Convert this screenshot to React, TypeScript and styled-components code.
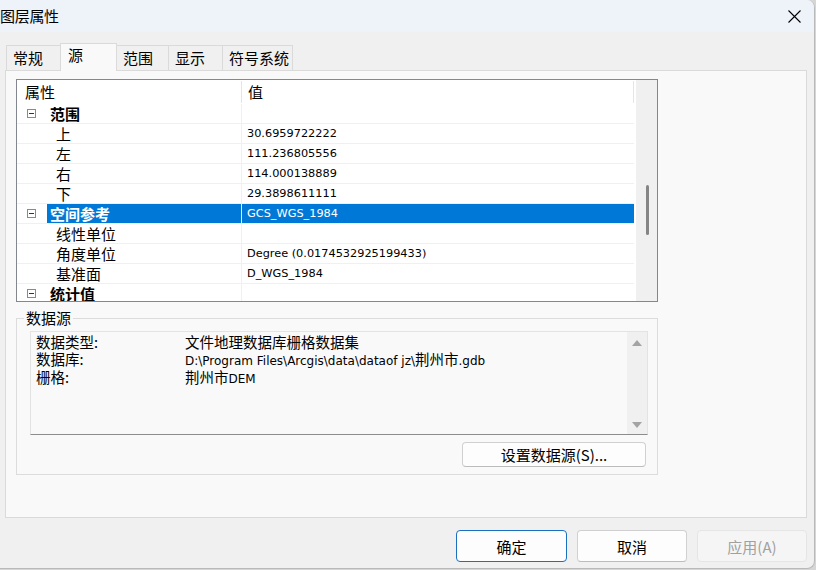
import React from 'react'
import styled, { createGlobalStyle, css } from 'styled-components'

const cjk = `"Noto Sans CJK SC", "Microsoft YaHei", sans-serif`
const latin = `"DejaVu Sans", "Noto Sans CJK SC", sans-serif`

const Global = createGlobalStyle`
  html, body { margin: 0; padding: 0; background: #d6d6d6; }
  body { font-family: ${cjk}; color: #000; }
  * { box-sizing: border-box; }
`

const Window = styled.div`
  width: 815px;
  height: 569px;
  background: #f0f0f0;
  border-right: 1px solid #b9b9b9;
  border-bottom: 1px solid #b9b9b9;
  border-radius: 0 8px 8px 0;
  overflow: hidden;
  display: flex;
  flex-direction: column;
`

const TitleBar = styled.div`
  height: 32px;
  flex: none;
  background: #eef2f9;
  display: flex;
  align-items: center;
  justify-content: space-between;
`

const Title = styled.div`
  font-size: 15px;
  line-height: 30px;
  letter-spacing: -0.3px;
`

const CloseButton = styled.div`
  width: 40px;
  height: 32px;
  display: flex;
  align-items: center;
  justify-content: center;
`

const Body = styled.div`
  flex: 1;
  display: flex;
  flex-direction: column;
  padding: 11px 7px 0 5px;
`

const TabStrip = styled.div`
  height: 27px;
  display: flex;
  align-items: flex-end;
  padding-left: 1px;
`

const Tab = styled.div<{ $w: number; $active?: boolean }>`
  width: ${p => p.$w}px;
  height: 25px;
  border: 1px solid #dadada;
  border-bottom: none;
  background: #f0f0f0;
  font-size: 15px;
  line-height: 23px;
  padding-left: 6px;
  margin-right: -1px;
  ${p =>
    p.$active &&
    css`
      height: 28px;
      margin-bottom: -1px;
      background: #f9f9f9;
      line-height: 22px;
      padding-left: 7px;
      position: relative;
      z-index: 1;
    `}
`

const Panel = styled.div`
  height: 448px;
  background: #f9f9f9;
  border: 1px solid #dadada;
  padding: 8px 0 0 10px;
`

const Grid = styled.div`
  width: 642px;
  height: 223px;
  border: 1px solid #828790;
  background: #fff;
  display: flex;
  overflow: hidden;
`

const Table = styled.div`
  width: 617px;
  margin-right: 2px;
  display: flex;
  flex-direction: column;
`

const HeaderRow = styled.div`
  height: 24px;
  flex: none;
  display: flex;
  font-size: 15px;
`

const HeaderCell = styled.div<{ $w: number; $pad: number }>`
  width: ${p => p.$w}px;
  padding-left: ${p => p.$pad}px;
  border-right: 1px solid #e5e5e5;
  margin: 1px 0;
  line-height: 22px;
`

const Row = styled.div`
  height: 20px;
  flex: none;
  display: flex;
  border-bottom: 1px solid #f0f0f0;
`

const Expander = styled.div`
  width: 30px;
  display: flex;
  align-items: center;
  padding-left: 10px;
`

const MinusBox = styled.span`
  width: 9px;
  height: 9px;
  border: 1px solid #8a8a8a;
  position: relative;
  &::after {
    content: '';
    position: absolute;
    left: 1px;
    right: 1px;
    top: 3px;
    height: 1px;
    background: #333;
  }
`

const Label = styled.div<{ $cat?: boolean; $sel?: boolean }>`
  width: 195px;
  font-size: 15px;
  line-height: 20px;
  padding-left: ${p => (p.$cat ? 3 : 9)}px;
  font-weight: ${p => (p.$cat ? 700 : 400)};
  border-right: 1px solid #f0f0f0;
  white-space: nowrap;
  ${p => p.$sel && 'background: #0078d7; color: #fff;'}
`

const Value = styled.div<{ $sel?: boolean }>`
  flex: 1;
  font-family: ${latin};
  font-size: 11.3px;
  line-height: 20px;
  padding-left: 5px;
  white-space: nowrap;
  ${p => p.$sel && 'background: #0078d7; color: #fff;'}
`

const GridScroll = styled.div`
  width: 21px;
  background: #f0f0f0;
  display: flex;
  flex-direction: column;
  align-items: center;
`

const Thumb = styled.div`
  width: 3px;
  height: 50px;
  margin-top: 105px;
  margin-left: 1px;
  border-radius: 2px;
  background: #858585;
`

const Group = styled.fieldset`
  width: 642px;
  margin: 7px 0 0;
  padding: 0 10px 7px 13px;
  border: 1px solid #dcdcdc;
  display: flex;
  flex-direction: column;
  align-items: flex-end;
`

const Legend = styled.legend`
  font-size: 15px;
  line-height: 18px;
  padding: 0 2px;
  margin-left: -6px;
`

const TextBox = styled.div`
  width: 618px;
  height: 104px;
  margin-top: 4px;
  margin-right: -1px;
  background: #f9f9f9;
  border: 1px solid #e3e3e3;
  border-bottom-color: #8c8c8c;
  display: flex;
`

const Lines = styled.div`
  flex: 1;
  padding: 2px 0 0 5px;
  font-size: 14.5px;
  line-height: 16.5px;
`

const Line = styled.div`
  display: flex;
  white-space: nowrap;
`

const Key = styled.span`
  width: 149px;
`

const Small = styled.span`
  font-family: ${latin};
  font-size: 12px;
`

const BoxScroll = styled.div`
  width: 20px;
  background: #f0f0f0;
  display: flex;
  flex-direction: column;
  justify-content: space-between;
  align-items: center;
  padding: 8px 0 6px;
`

const Arrow = styled.div<{ $down?: boolean }>`
  width: 0;
  height: 0;
  border-left: 5px solid transparent;
  border-right: 5px solid transparent;
  ${p =>
    p.$down ? 'border-top: 6px solid #a3a3a3;' : 'border-bottom: 6px solid #a3a3a3;'}
`

const Button = styled.div<{ $w: number; $h: number; $primary?: boolean; $disabled?: boolean }>`
  width: ${p => p.$w}px;
  height: ${p => p.$h}px;
  background: #fdfdfd;
  border: 1px solid #d0d0d0;
  border-bottom-color: #bcbcbc;
  border-radius: 4px;
  display: flex;
  align-items: center;
  justify-content: center;
  font-size: 15px;
  ${p => p.$primary && 'border-color: #1a6fc1;'}
  ${p => p.$disabled && 'background: #f5f5f5; border-color: #e5e5e5; color: #a0a0a0;'}
`

const SourceButton = styled(Button)`
  margin-top: 7px;
  margin-right: 1px;
`

const Footer = styled.div`
  display: flex;
  justify-content: flex-end;
  gap: 10px;
  margin-top: 12px;
`

type GridRow = { label: string; value?: string; cat?: boolean; sel?: boolean }

const rows: GridRow[] = [
  { label: '范围', cat: true },
  { label: '上', value: '30.6959722222' },
  { label: '左', value: '111.236805556' },
  { label: '右', value: '114.000138889' },
  { label: '下', value: '29.3898611111' },
  { label: '空间参考', value: 'GCS_WGS_1984', cat: true, sel: true },
  { label: '线性单位' },
  { label: '角度单位', value: 'Degree (0.0174532925199433)' },
  { label: '基准面', value: 'D_WGS_1984' },
  { label: '统计值', cat: true },
]

const tabs = [
  { name: '常规', w: 55 },
  { name: '源', w: 57, active: true },
  { name: '范围', w: 53 },
  { name: '显示', w: 55 },
  { name: '符号系统', w: 71 },
]

export default function App() {
  return (
    <>
      <Global />
      <Window>
        <TitleBar>
          <Title>图层属性</Title>
          <CloseButton>
            <svg width="13" height="13" viewBox="0 0 13 13">
              <path d="M0.5 0.5 L12.5 12.5 M12.5 0.5 L0.5 12.5" stroke="#000" strokeWidth="1.1" />
            </svg>
          </CloseButton>
        </TitleBar>
        <Body>
          <TabStrip>
            {tabs.map(t => (
              <Tab key={t.name} $w={t.w} $active={t.active}>
                {t.name}
              </Tab>
            ))}
          </TabStrip>
          <Panel>
            <Grid>
              <Table>
                <HeaderRow>
                  <HeaderCell $w={225} $pad={8}>属性</HeaderCell>
                  <HeaderCell $w={392} $pad={6}>值</HeaderCell>
                </HeaderRow>
                {rows.map(r => (
                  <Row key={r.label}>
                    <Expander>{r.cat && <MinusBox />}</Expander>
                    <Label $cat={r.cat} $sel={r.sel}>
                      {r.label}
                    </Label>
                    <Value $sel={r.sel}>{r.value}</Value>
                  </Row>
                ))}
              </Table>
              <GridScroll>
                <Thumb />
              </GridScroll>
            </Grid>
            <Group>
              <Legend>数据源</Legend>
              <TextBox>
                <Lines>
                  <Line>
                    <Key>数据类型:</Key>
                    <span>文件地理数据库栅格数据集</span>
                  </Line>
                  <Line>
                    <Key>数据库:</Key>
                    <span>
                      <Small>D:\Program Files\Arcgis\data\dataof jz\</Small>荆州市<Small>.gdb</Small>
                    </span>
                  </Line>
                  <Line>
                    <Key>栅格:</Key>
                    <span>
                      荆州市<Small>DEM</Small>
                    </span>
                  </Line>
                </Lines>
                <BoxScroll>
                  <Arrow />
                  <Arrow $down />
                </BoxScroll>
              </TextBox>
              <SourceButton $w={184} $h={25}>
                设置数据源(S)...
              </SourceButton>
            </Group>
          </Panel>
          <Footer>
            <Button $w={111} $h={32} $primary>
              确定
            </Button>
            <Button $w={110} $h={32}>取消</Button>
            <Button $w={110} $h={32} $disabled>
              应用(A)
            </Button>
          </Footer>
        </Body>
      </Window>
    </>
  )
}
